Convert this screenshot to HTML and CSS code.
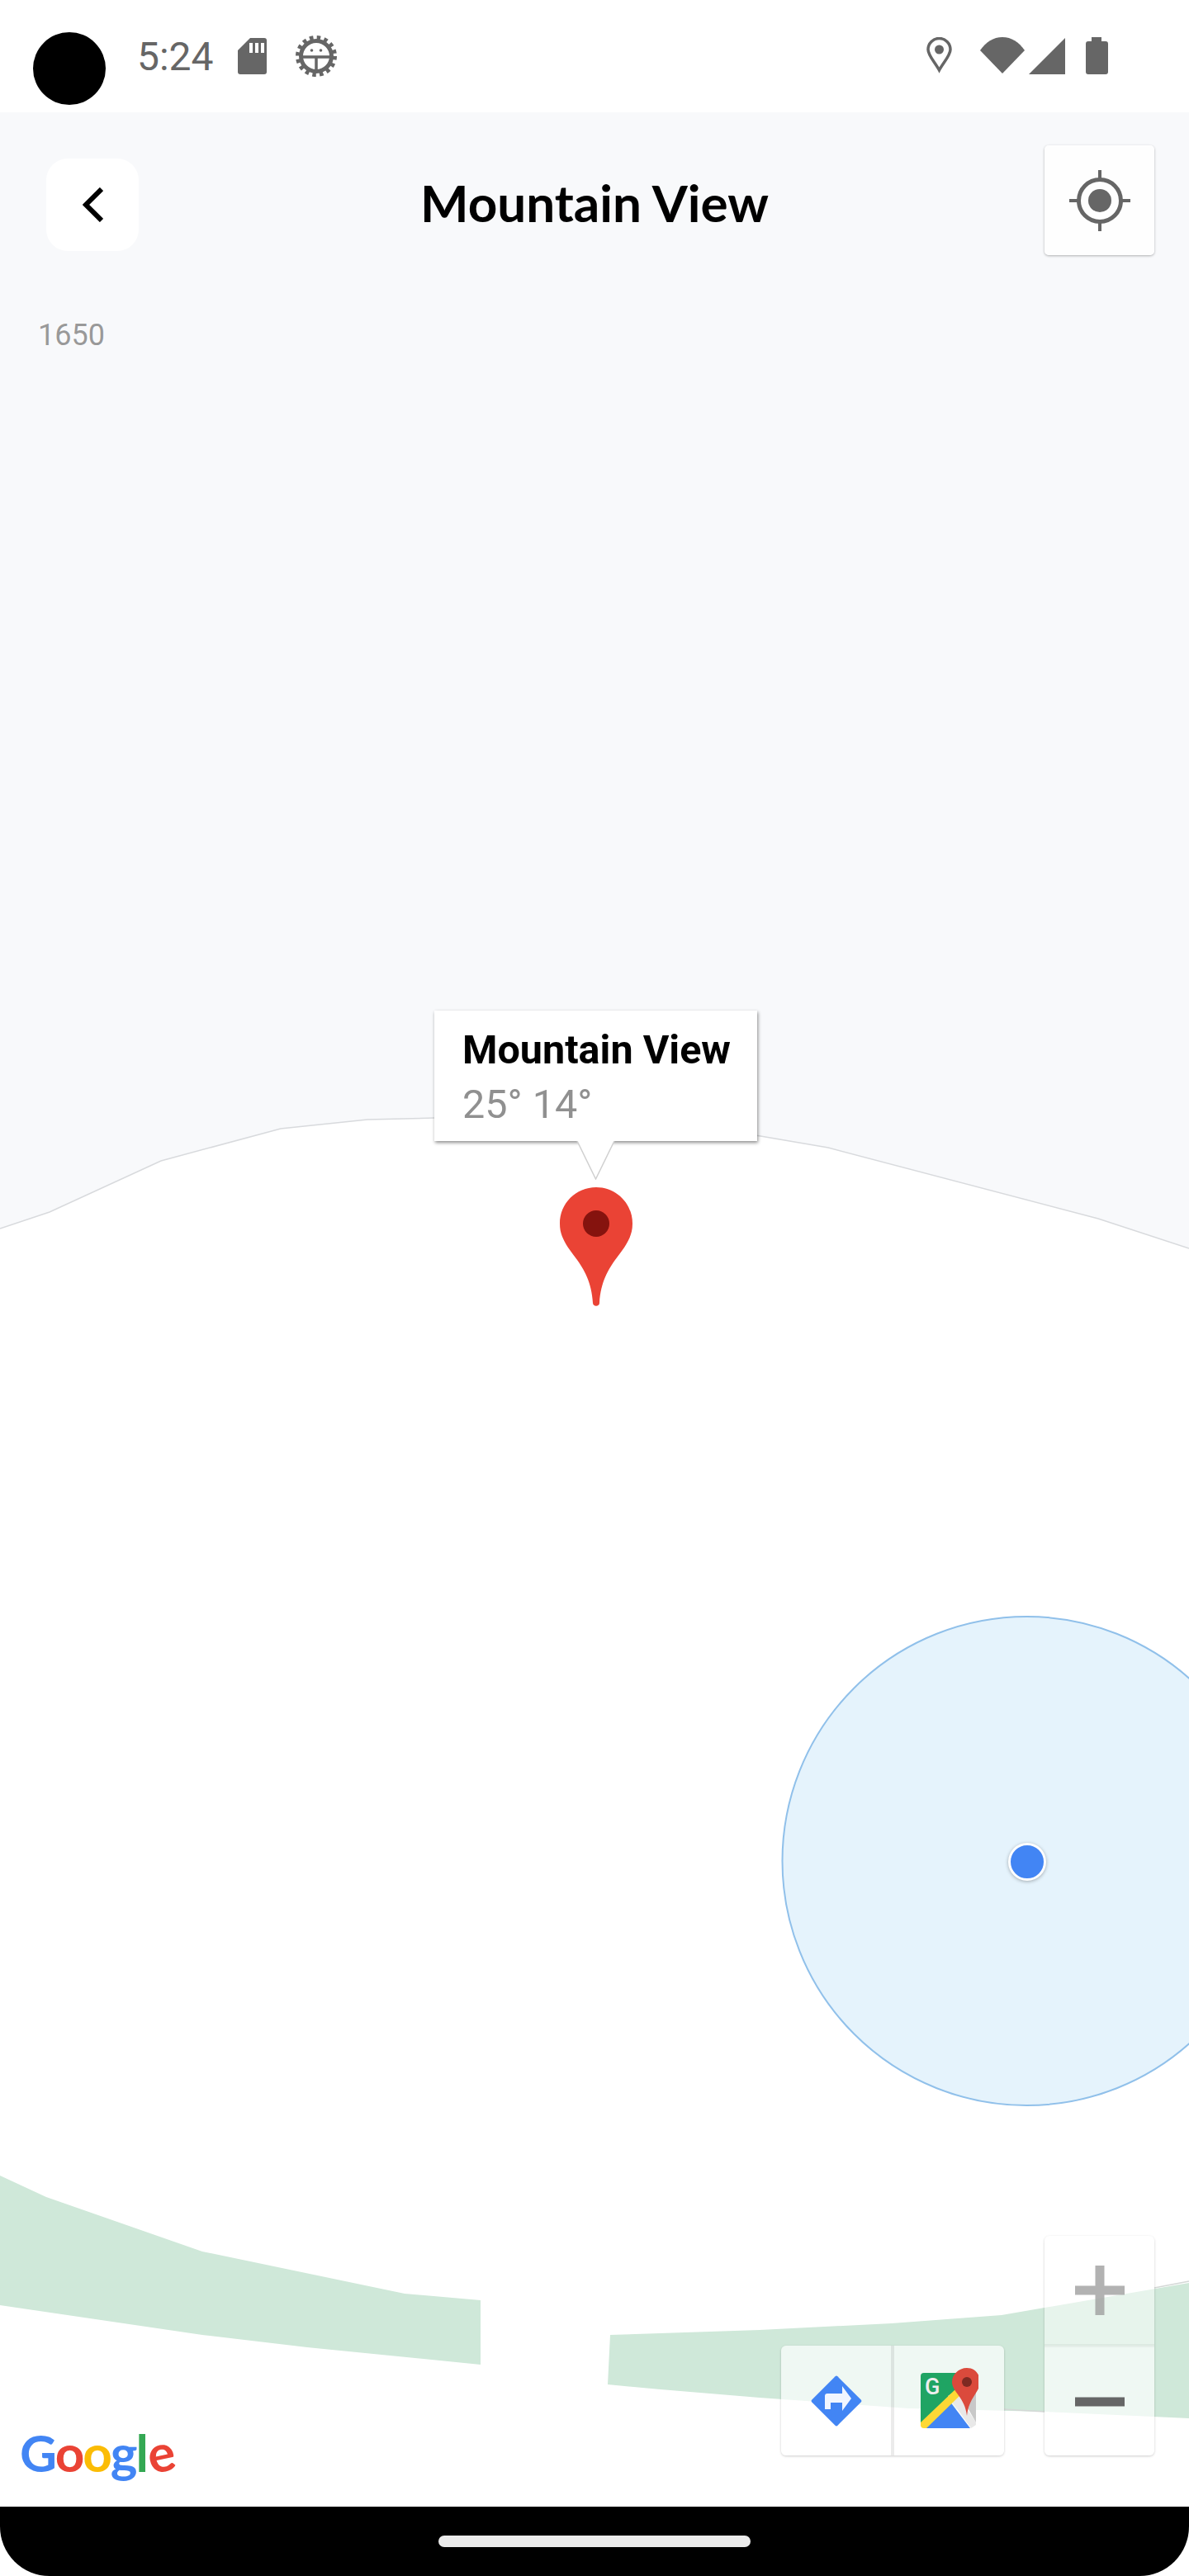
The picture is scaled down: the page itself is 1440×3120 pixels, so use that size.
FILE: index.html
```html
<!DOCTYPE html>
<html lang="en">
<head>
<meta charset="utf-8">
<title>Mountain View</title>
<link rel="stylesheet" href="styles.css">
</head>
<body>
<div class="phone">
  <div class="status-bar">
    <div class="status-left">
      <div class="camera"></div>
      <span class="clock">5:24</span>
      <svg class="ic-sd" viewBox="0 0 35 44"><path fill="#666" d="M15 0H32a3 3 0 0 1 3 3V41a3 3 0 0 1-3 3H3a3 3 0 0 1-3-3V15z"/><path fill="#fff" d="M14 6h4v12h-4zM21 6h4v12h-4zM28 6h4v12h-4z"/></svg>
      <svg class="ic-gear" viewBox="0 0 50 50"><circle cx="25" cy="25" r="22.500" fill="none" stroke="#666" stroke-width="5" stroke-dasharray="4.500 4.340"/><circle cx="25" cy="25" r="18.500" fill="#fff" stroke="#666" stroke-width="5"/><path fill="none" stroke="#666" stroke-width="3.500" d="M7 26H43M25 26V44"/><circle cx="19.500" cy="18" r="1.800" fill="#666"/><circle cx="30.500" cy="18" r="1.800" fill="#666"/></svg>
    </div>
    <div class="status-right">
      <svg class="ic-loc" viewBox="0 0 31 44"><path fill="none" stroke="#666" stroke-width="3.500" d="M15.500 40C10 30 2 22 2 15a13.500 13.500 0 0 1 27 0c0 7-8 15-13.500 25z"/><circle cx="15.500" cy="15" r="5.500" fill="#666"/></svg>
      <svg class="ic-wifi" viewBox="0 0 54 44"><path fill="#666" d="M0 16C7 6 16 0 27 0s20 6 27 16L27 44z"/></svg>
      <svg class="ic-signal" viewBox="0 0 44 44"><path fill="#666" d="M44 0V44H0z"/></svg>
      <svg class="ic-batt" viewBox="0 0 27 45"><path fill="#666" d="M7 0H19V5H24a3 3 0 0 1 3 3V42a3 3 0 0 1-3 3H3a3 3 0 0 1-3-3V8a3 3 0 0 1 3-3H7z"/></svg>
    </div>
  </div>

  <main class="map">
    <svg class="map-canvas" viewBox="0 136 1440 2900" preserveAspectRatio="none">
      <path class="land-top" d="M0 136H1440V1512L1330 1476 1003 1390 921 1376 800 1358 620 1352 526 1354 445 1356 340 1367 195 1406 60 1468 0 1488z"/>
      <path class="land-edge" d="M0 1488L60 1468 195 1406 340 1367 445 1356 526 1354 620 1352 800 1358 921 1376 1003 1390 1330 1476 1440 1512"/>
      <path class="park" d="M0 2635L56 2661 245 2727 490 2778 582 2786V2864L372 2843 245 2828 0 2792z"/>
      <path class="park" d="M739 2828L920 2822 1080 2814 1213 2804 1265 2795 1440 2765V2929L1265 2921 1100 2917 920 2904 800 2894 736 2888z"/>
      <path class="park-edge" d="M1398 2771L1440 2763M1216 2918L1265 2921"/>
      <circle class="accuracy" cx="1243.500" cy="2254" r="296"/>
    </svg>

    <header class="top-bar">
      <button class="back-btn" type="button" aria-label="Back">
        <svg class="ic-chevron" viewBox="0 0 25 42"><path fill="none" stroke="#000" stroke-width="6" d="M23 2L4 21 23 40"/></svg>
      </button>
      <h1 class="title">Mountain View</h1>
      <button class="map-btn locate-btn" type="button" aria-label="My location">
        <svg class="ic-target" viewBox="0 0 74 74"><circle cx="37" cy="37" r="25.500" fill="none" stroke="#666" stroke-width="5"/><circle cx="37" cy="37" r="14" fill="#666"/><path stroke="#666" stroke-width="4" d="M37 0V12M37 62V74M0 37H12M62 37H74"/></svg>
      </button>
    </header>

    <div class="elevation">1650</div>

    <div class="marker">
      <div class="info-window">
        <div class="info-title">Mountain View</div>
        <div class="info-text">25° 14°</div>
      </div>
      <svg class="info-tail" viewBox="0 0 47 47"><path fill="#fff" d="M1 0H46L23.500 46z"/><path fill="none" stroke="#d0d0d0" stroke-width="1.500" d="M1 0L23.500 46 46 0"/></svg>
      <svg class="pin" viewBox="0 0 88 144"><path fill="#ea4335" d="M44 0C68.500 0 88 19.500 88 44C88 56 84 63 78 73C66 90 50 106 48 140C48 145 40 145 40 140C38 106 22 90 10 73C4 63 0 56 0 44C0 19.500 19.500 0 44 0z"/><circle cx="44" cy="44" r="16" fill="#85130e"/></svg>
    </div>

    <div class="my-dot"></div>

    <div class="zoom-ctrl">
      <button class="zoom-btn zoom-plus" type="button" aria-label="Zoom in">
        <svg class="ic-zoom" viewBox="0 0 60 60"><path fill="#9f9f9f" fill-opacity=".8" d="M24.500 0H35.500V24.500H60V35.500H35.500V60H24.500V35.500H0V24.500H24.500z"/></svg>
      </button>
      <button class="zoom-btn zoom-minus" type="button" aria-label="Zoom out">
        <svg class="ic-zoom" viewBox="0 0 60 60"><path fill="#666" d="M0 24.500H60V35.500H0z"/></svg>
      </button>
    </div>

    <div class="toolbar">
      <button class="tool-btn" type="button" aria-label="Directions">
        <svg class="ic-dir" viewBox="0 0 68 68"><rect x="12" y="12" width="44" height="44" rx="2" fill="#4285f4" transform="rotate(45 34 34)" /><path fill="#fff" fill-opacity=".93" d="M20 44V28a3 3 0 0 1 3-3H41V16L52 31 41 46V36H27V44z"/></svg>
      </button>
      <button class="tool-btn" type="button" aria-label="Open in Maps">
        <svg class="ic-gmaps" viewBox="0 0 70 74">
          <path fill="#1fa463" d="M4 6H48V28L0 70V10a4 4 0 0 1 4-4z"/>
          <path fill="#4285f4" d="M6 73L35 40 60 73z"/>
          <path fill="#e8e8e8" d="M33 34L42 28 67 66V69L61 73z"/>
          <path fill="#c8c8c8" d="M42 22H67V66z"/>
          <path fill="#fdd835" d="M0 66L42 26 48 33 7 73H4a4 4 0 0 1-4-4z"/>
          <text class="gmaps-g" x="5" y="31.500">G</text>
          <path fill="#db4a3c" d="M56 0C66 0 72 8 72 17C72 29 58 36 56 58C54 36 38 29 38 17C38 8 46 0 56 0z"/>
          <circle cx="56" cy="17" r="6" fill="#7e2a22"/>
        </svg>
      </button>
    </div>

    <div class="google-logo"><span class="g-blue">G</span><span class="g-red">o</span><span class="g-yellow">o</span><span class="g-blue">g</span><span class="g-green">l</span><span class="g-red g-e">e</span></div>
  </main>

  <footer class="nav-bar"><div class="home-pill"></div></footer>
</div>
</body>
</html>
```
FILE: styles.css
```css
* { box-sizing: border-box; }
html, body { margin: 0; padding: 0; background: #fff; }
body { font-family: Roboto, "Liberation Sans", sans-serif; }
button { border: 0; padding: 0; margin: 0; font: inherit; cursor: pointer; }
svg { display: block; }

.phone { width: 1440px; height: 3120px; display: flex; flex-direction: column; overflow: hidden; background: #fff; }

/* status bar */
.status-bar { height: 136px; flex: none; display: flex; justify-content: space-between; align-items: flex-start; background: #fff; padding: 0 98px 0 40px; }
.status-left { display: flex; align-items: flex-start; }
.camera { width: 88px; height: 88px; border-radius: 50%; background: #000; margin-top: 39px; }
.clock { font-size: 48px; line-height: 56px; color: #666; margin: 41px 0 0 38px; width: 122px; }
.ic-sd { width: 35px; height: 44px; margin-top: 46px; }
.ic-gear { width: 50px; height: 50px; margin: 43px 0 0 35px; }
.status-right { display: flex; align-items: flex-start; padding-top: 45px; }
.ic-loc { width: 31px; height: 44px; }
.ic-wifi { width: 54px; height: 44px; margin-left: 34px; }
.ic-signal { width: 44px; height: 44px; margin: 1px 0 0 5px; }
.ic-batt { width: 27px; height: 45px; margin-left: 25px; }

/* map */
.map { position: relative; flex: 1; display: flex; flex-direction: column; background: #fff; overflow: hidden; }
.map-canvas { position: absolute; inset: 0; width: 100%; height: 100%; }
.land-top { fill: #f8f9fb; }
.land-edge { fill: none; stroke: #d8dadd; stroke-width: 1.500; }
.park { fill: #cfe8d9; }
.park-edge { fill: none; stroke: #d4d8d6; stroke-width: 1.500; }
.accuracy { fill: #e5f3fc; stroke: #90c0ea; stroke-width: 2; }

.top-bar { position: relative; display: flex; align-items: flex-start; justify-content: space-between; padding: 40px 42px 0 56px; }
.back-btn { width: 112px; height: 112px; margin-top: 16px; border-radius: 26px; background: #fff; display: flex; align-items: center; justify-content: center; }
.ic-chevron { width: 25px; height: 42px; }
.title { position: absolute; left: 0; right: 0; top: 73px; margin: 0; text-align: center; font-family: Lato, "Liberation Sans", sans-serif; font-weight: 700; font-size: 62px; line-height: 72px; color: #000; }
.map-btn { background: rgba(255,255,255,.8); border-radius: 5px; box-shadow: 0 1px 3px rgba(0,0,0,.3); }
.locate-btn { width: 133px; height: 133px; display: flex; align-items: center; justify-content: center; }
.ic-target { width: 74px; height: 74px; }

.elevation { position: relative; margin: 76px 0 0 46px; font-size: 36px; line-height: 42px; color: #999; text-shadow: 0 0 3px #fff; }

.marker { position: absolute; left: 526px; top: 1088px; width: 391px; display: flex; flex-direction: column; align-items: center; }
.info-window { width: 100%; height: 158px; padding: 20px 34px 0; background: #fff; box-shadow: 1px 2px 4px rgba(0,0,0,.45); display: flex; flex-direction: column; }
.info-title { font-size: 48.500px; line-height: 56px; font-weight: 700; color: #000; white-space: nowrap; }
.info-text { font-size: 48.500px; line-height: 56px; margin-top: 10px; color: #909090; white-space: nowrap; }
.info-tail { position: relative; width: 47px; height: 47px; }
.pin { width: 88px; height: 144px; margin-top: 9px; }

.my-dot { position: absolute; left: 1221px; top: 2096px; width: 46px; height: 46px; border-radius: 50%; background: #4285f4; border: 3px solid #fff; box-shadow: 0 1px 4px rgba(0,0,0,.3); }

.zoom-ctrl { position: absolute; left: 1265px; top: 2572px; width: 133px; height: 266px; display: flex; flex-direction: column; border-radius: 6px; box-shadow: 0 1px 3px rgba(0,0,0,.2); overflow: hidden; }
.zoom-btn { flex: 1; display: flex; align-items: center; justify-content: center; }
.zoom-plus { background: rgba(255,255,255,.5); border-bottom: 2px solid rgba(0,0,0,.04); }
.zoom-minus { background: rgba(255,255,255,.67); border-top: 2px solid rgba(0,0,0,.04); }
.ic-zoom { width: 60px; height: 60px; }

.toolbar { position: absolute; left: 946px; top: 2705px; width: 270px; height: 133px; display: flex; border-radius: 6px; box-shadow: 0 1px 3px rgba(0,0,0,.2); overflow: hidden; background: rgba(255,255,255,.67); }
.tool-btn { flex: 1; display: flex; align-items: center; justify-content: center; background: transparent; }
.tool-btn + .tool-btn { border-left: 4px solid rgba(0,0,0,.08); }
.ic-dir { width: 68px; height: 68px; }
.ic-gmaps { width: 70px; height: 74px; margin-top: -6px; }
.gmaps-g { font-family: Roboto, sans-serif; font-weight: 500; font-size: 27px; fill: #eee; }

.google-logo { position: absolute; left: 24px; top: 2796px; font-family: Lato, sans-serif; font-weight: 700; font-size: 62px; line-height: 76px; letter-spacing: -2px; white-space: nowrap; }
.g-blue { color: #4285f4; }
.g-red { color: #ea4335; }
.g-yellow { color: #fbbc05; }
.g-green { color: #34a853; }
.g-e { display: inline-block; transform: rotate(-12deg); }

/* nav */
.nav-bar { height: 84px; flex: none; background: #000; border-radius: 0 0 60px 60px; display: flex; justify-content: center; padding-top: 35px; }
.home-pill { width: 378px; height: 14px; border-radius: 7px; background: #ebebeb; }
```
